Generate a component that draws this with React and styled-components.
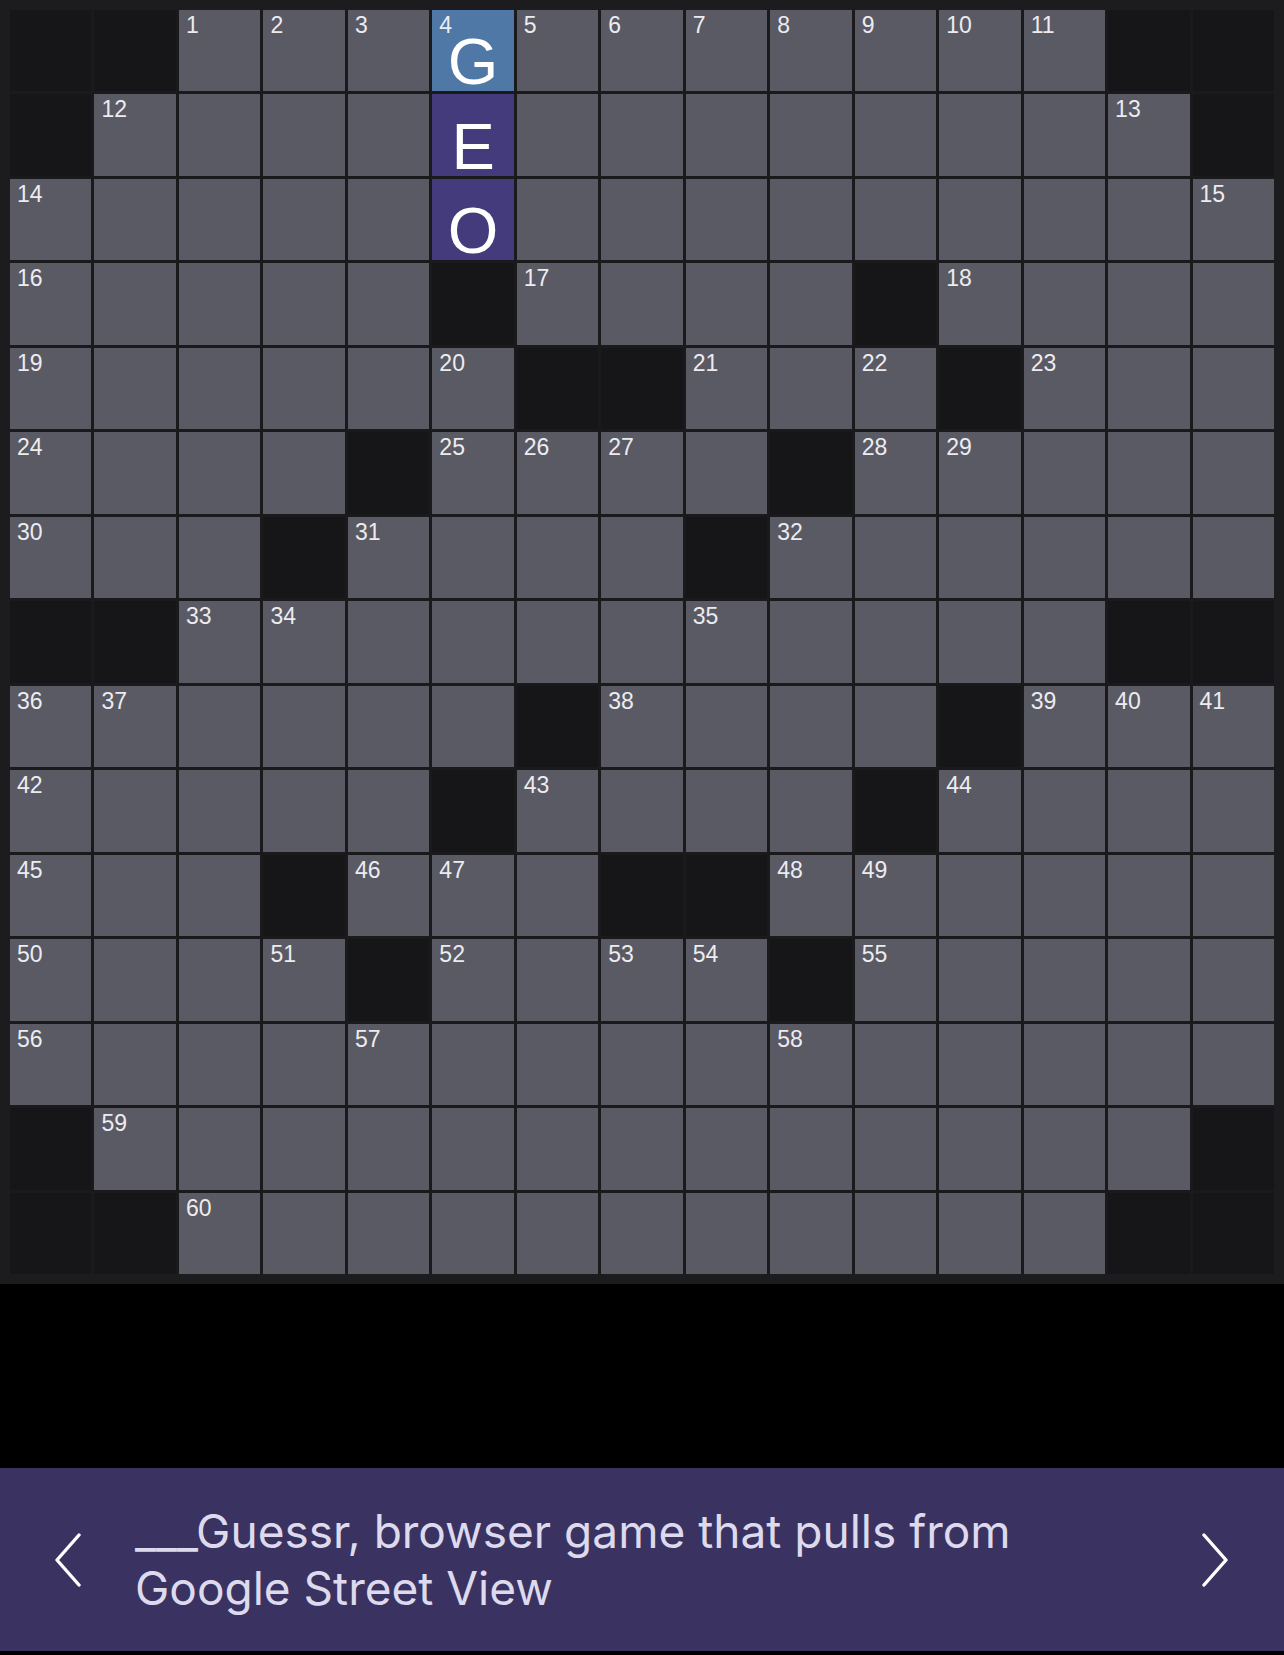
import React from 'react';
import styled, { createGlobalStyle } from 'styled-components';

const LAYOUT = [
  '##...........##',
  '#.............#',
  '...............',
  '.....#....#....',
  '......##...#...',
  '....#....#.....',
  '...#....#......',
  '##...........##',
  '......#....#...',
  '.....#....#....',
  '...#...##......',
  '....#....#.....',
  '...............',
  '#.............#',
  '##...........##',
];

// letters typed so far, keyed "row-col"
const ENTRIES = { '0-5': 'G', '1-5': 'E', '2-5': 'O' };
const SELECTED = '0-5';
const WORD = ['0-5', '1-5', '2-5'];

const isWhite = (r, c) =>
  r >= 0 && r < LAYOUT.length && c >= 0 && c < LAYOUT[0].length && LAYOUT[r][c] === '.';

// standard crossword numbering
function buildCells() {
  let n = 0;
  const cells = [];
  LAYOUT.forEach((row, r) => {
    row.split('').forEach((ch, c) => {
      if (ch !== '.') {
        cells.push({ key: `${r}-${c}`, block: true });
        return;
      }
      const across = !isWhite(r, c - 1) && isWhite(r, c + 1);
      const down = !isWhite(r - 1, c) && isWhite(r + 1, c);
      const num = across || down ? ++n : null;
      cells.push({ key: `${r}-${c}`, block: false, num });
    });
  });
  return cells;
}

const GlobalStyle = createGlobalStyle`
  html, body {
    margin: 0;
    padding: 0;
    background: #000;
  }
  body {
    font-family: Inter, "Liberation Sans", Arial, sans-serif;
    -webkit-font-smoothing: antialiased;
  }
`;

const Page = styled.div`
  width: 1284px;
  height: 1655px;
  display: flex;
  flex-direction: column;
  background: #000;
`;

const Board = styled.div`
  background: #1c1c1f;
  padding: 10px;
`;

const Grid = styled.div`
  display: grid;
  grid-template-columns: repeat(15, 1fr);
  gap: 3px;
  background: #1a1a1d;
`;

const Cell = styled.div`
  position: relative;
  aspect-ratio: 1 / 1;
  display: flex;
  align-items: flex-end;
  justify-content: center;
  padding-bottom: 4px;
  box-sizing: border-box;
  background: ${p =>
    p.$block ? '#161619' : p.$selected ? '#4f78a6' : p.$word ? '#433b7b' : '#5a5a64'};
`;

const Num = styled.span`
  position: absolute;
  top: 5px;
  left: 7px;
  font-family: "Liberation Sans", Arial, sans-serif;
  font-size: 23px;
  line-height: 21px;
  color: #ececf0;
`;

const Letter = styled.span`
  font-family: "Liberation Sans", Arial, sans-serif;
  font-size: 65px;
  line-height: 50px;
  color: #ffffff;
`;

const ClueBar = styled.div`
  margin-top: 184px;
  height: 183px;
  background: #3a3361;
  display: flex;
  align-items: center;
  padding: 0 56px 0 55px;
  box-sizing: border-box;
`;

const Arrow = styled.svg`
  flex: none;
  width: 26px;
  height: 54px;
`;

const ClueText = styled.div`
  flex: 1;
  max-width: 960px;
  margin: 0 auto 0 54px;
  font-size: 46px;
  font-weight: 400;
  line-height: 57px;
  color: #dedaee;
`;

function Chevron({ dir }) {
  const pts = dir === 'left' ? '24,2 2,27 24,52' : '2,2 24,27 2,52';
  return (
    <Arrow viewBox="0 0 26 54">
      <polyline
        points={pts}
        fill="none"
        stroke="#ffffff"
        strokeWidth="3.4"
        strokeLinecap="round"
        strokeLinejoin="round"
      />
    </Arrow>
  );
}

export default function App() {
  const cells = buildCells();
  return (
    <Page>
      <GlobalStyle />
      <Board>
        <Grid>
          {cells.map(cell => (
            <Cell
              key={cell.key}
              $block={cell.block}
              $selected={cell.key === SELECTED}
              $word={WORD.includes(cell.key)}
            >
              {cell.num && <Num>{cell.num}</Num>}
              {ENTRIES[cell.key] && <Letter>{ENTRIES[cell.key]}</Letter>}
            </Cell>
          ))}
        </Grid>
      </Board>
      <ClueBar>
        <Chevron dir="left" />
        <ClueText>___Guessr, browser game that pulls from Google Street View</ClueText>
        <Chevron dir="right" />
      </ClueBar>
    </Page>
  );
}
